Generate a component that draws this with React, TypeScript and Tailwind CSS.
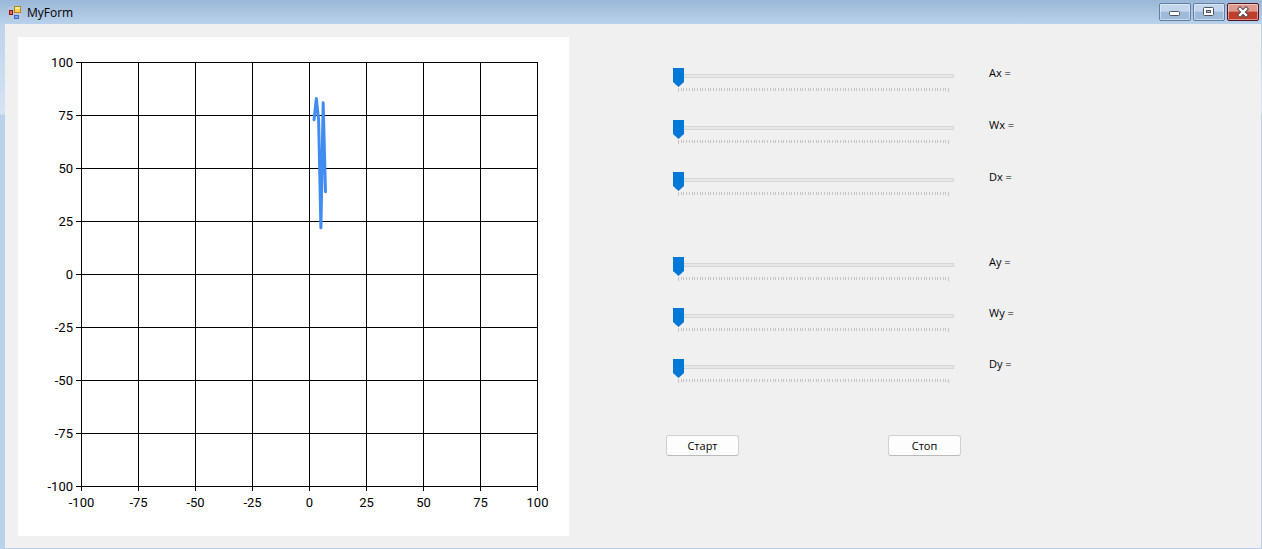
import { useState } from "react";

const STEPS = [-100, -75, -50, -25, 0, 25, 50, 75, 100];
const toX = (v: number) => 63.5 + (v + 100) * 2.28;
const toY = (v: number) => 449.5 - (v + 100) * 2.12;
const POINTS = [
  [2, 73],
  [3, 83],
  [4, 73],
  [5, 22],
  [6, 81],
  [7, 39],
];

function Chart() {
  return (
    <svg
      viewBox="0 0 551 499"
      className="block w-full bg-white"
      role="img"
      aria-label="Chart"
      fontFamily="Roboto, 'Liberation Sans', sans-serif"
      fontSize="13"
    >
      <g stroke="#000" strokeWidth="1" shapeRendering="crispEdges">
        {STEPS.map((v) => (
          <g key={v}>
            <line x1={toX(v)} x2={toX(v)} y1={25} y2={454} />
            <line x1={58} x2={520} y1={toY(v)} y2={toY(v)} />
          </g>
        ))}
      </g>
      {STEPS.map((v) => (
        <g key={v} fill="#000">
          <text x={toX(v)} y={470} textAnchor="middle">
            {v}
          </text>
          <text x={55} y={toY(v) + 4.5} textAnchor="end">
            {v}
          </text>
        </g>
      ))}
      <polyline
        points={POINTS.map(([x, y]) => `${toX(x)},${toY(y)}`).join(" ")}
        fill="none"
        stroke="#418cf0"
        strokeWidth="3"
        strokeLinecap="round"
        strokeLinejoin="round"
      />
    </svg>
  );
}

function Ticks() {
  return (
    <svg viewBox="0 0 281 5" className="mt-0.5 block h-[5px] w-full" preserveAspectRatio="none" aria-hidden="true">
      <g stroke="#c4c4c4" shapeRendering="crispEdges">
        {Array.from({ length: 101 }, (_, i) => {
          const x = Math.round(5 + i * 2.7) + 0.5;
          return <line key={i} x1={x} x2={x} y1={0} y2={i === 0 || i === 100 ? 4 : 3} />;
        })}
      </g>
    </svg>
  );
}

function Trackbar({ name, height }: { name: string; height: string }) {
  const [value, setValue] = useState(0);
  return (
    <div className={`flex items-start gap-[35px] ${height}`}>
      <div className="w-[281px] min-w-0 pt-px">
        <input
          id={name}
          type="range"
          min={0}
          max={100}
          value={value}
          onChange={(e) => setValue(Number(e.target.value))}
          className="block h-5 w-full appearance-none bg-transparent [&::-webkit-slider-runnable-track]:h-1 [&::-webkit-slider-runnable-track]:border [&::-webkit-slider-runnable-track]:border-[#d6d6d6] [&::-webkit-slider-runnable-track]:bg-[#e7e7e7] [&::-webkit-slider-thumb]:-mt-[7px] [&::-webkit-slider-thumb]:-ml-px [&::-webkit-slider-thumb]:h-[19px] [&::-webkit-slider-thumb]:w-[11px] [&::-webkit-slider-thumb]:appearance-none [&::-webkit-slider-thumb]:bg-[#0078d7] [&::-webkit-slider-thumb]:[clip-path:polygon(0_0,100%_0,100%_74%,50%_100%,0_74%)]"
        />
        <Ticks />
      </div>
      <label htmlFor={name} className="text-[11px] leading-4">
        {name} =
      </label>
    </div>
  );
}

const CAPTION =
  "flex h-[18px] w-8 items-center justify-center rounded-[2px] border shadow-[inset_0_0_0_1px_rgba(255,255,255,0.45)]";
const PLAIN = "border-[#5f7ea5] bg-linear-to-b from-[#c3d6eb] from-45% to-[#9dbbd9] to-50%";
const PUSH =
  "h-[21px] w-[73px] rounded-[3px] border border-[#d0d0d0] border-b-[#bababa] bg-[#fdfdfd] text-[11px] leading-4";

function TitleBar() {
  return (
    <header className="flex h-6 items-start justify-between bg-linear-to-b from-[#9bb7d7] to-[#b9d1ea] pr-[3px] pl-2">
      <div className="flex h-6 items-center gap-[5px] pt-0.5">
        <svg viewBox="0 0 14 14" className="size-3.5" aria-hidden="true">
          <rect x="0.5" y="0.5" width="13" height="13" fill="#c5ccd4" opacity="0.5" />
          <rect x="1.5" y="4.5" width="3" height="4" fill="#e0685c" stroke="#8c1510" />
          <rect x="6.5" y="0.5" width="6" height="6" fill="#fbd04a" stroke="#b48614" />
          <rect x="7" y="1" width="5" height="2" fill="#fdeaa0" />
          <rect x="6.5" y="9.5" width="4" height="3" fill="#79a5f2" stroke="#3b66c4" />
        </svg>
        <h1 className="text-[12px] leading-4">MyForm</h1>
      </div>
      <div className="flex gap-0.5 pt-[3px]">
        <button type="button" aria-label="Minimize" className={`${CAPTION} ${PLAIN}`}>
          <svg viewBox="0 0 12 12" className="size-3" aria-hidden="true">
            <rect x="0.5" y="5.5" width="10" height="4" rx="1" fill="#fff" stroke="#4f5560" />
          </svg>
        </button>
        <button type="button" aria-label="Maximize" className={`${CAPTION} ${PLAIN}`}>
          <svg viewBox="0 0 12 12" className="size-3" aria-hidden="true">
            <rect x="0.5" y="1.5" width="10" height="8" rx="1" fill="#fff" stroke="#4f5560" />
            <rect x="3.5" y="4.5" width="4" height="2" fill="#a9c2de" stroke="#4f5560" />
          </svg>
        </button>
        <button
          type="button"
          aria-label="Close"
          className={`${CAPTION} border-[#521422] bg-linear-to-b from-[#dd9a8e] from-45% to-[#bf3f2c] to-50%`}
        >
          <svg viewBox="0 0 12 12" className="size-3" aria-hidden="true" fill="none">
            <path d="M3 3l6 6M9 3l-6 6" stroke="#57444c" strokeWidth="4.4" strokeLinecap="square" />
            <path d="M3 3l6 6M9 3l-6 6" stroke="#fff" strokeWidth="2.4" strokeLinecap="square" />
          </svg>
        </button>
      </div>
    </header>
  );
}

export default function App() {
  return (
    <div className="flex min-h-screen flex-col bg-[#b9d1ea] font-['Open_Sans','Liberation_Sans',sans-serif] text-black">
      <TitleBar />
      <div className="flex grow pr-px pb-px pl-[5px] [background:linear-gradient(#bdd3ea,#d5e4f4_90px,#b9d1ea_91px)]">
        <main className="grid grow grid-cols-[551fr_692fr] bg-[#f0f0f0] pt-[13px] pb-3 pl-[13px]">
          <Chart />
          <div className="pt-7 pl-[104px]">
            <Trackbar name="Ax" height="h-[52px]" />
            <Trackbar name="Wx" height="h-[52px]" />
            <Trackbar name="Dx" height="h-[52px]" />
            <div className="pt-[33px]">
              <Trackbar name="Ay" height="h-[51px]" />
              <Trackbar name="Wy" height="h-[51px]" />
              <Trackbar name="Dy" height="h-[51px]" />
            </div>
            <div className="-ml-[7px] flex gap-[149px] pt-7">
              <button type="button" className={PUSH}>
                Старт
              </button>
              <button type="button" className={PUSH}>
                Стоп
              </button>
            </div>
          </div>
        </main>
      </div>
    </div>
  );
}
